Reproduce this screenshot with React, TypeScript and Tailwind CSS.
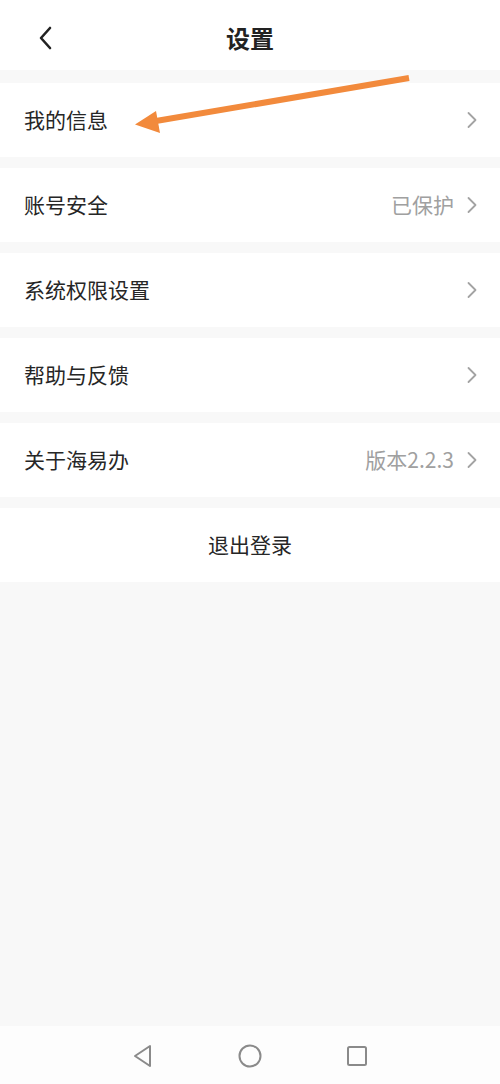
import React from 'react'

const font = { fontFamily: '"Noto Sans CJK SC", "Noto Sans", sans-serif' }

type Row = { label: string; value?: string }

const rows: Row[] = [
  { label: '我的信息' },
  { label: '账号安全', value: '已保护' },
  { label: '系统权限设置' },
  { label: '帮助与反馈' },
  { label: '关于海易办', value: '版本2.2.3' },
]

function Chevron() {
  return (
    <svg width="12" height="18" viewBox="0 0 12 18" fill="none">
      <path d="M2.5 2 L9.5 9 L2.5 16" stroke="#a3a3a3" strokeWidth="1.8" strokeLinecap="round" strokeLinejoin="round" />
    </svg>
  )
}

function SettingRow({ label, value }: Row) {
  return (
    <div className="h-[74px] bg-white flex items-center justify-between pl-6 pr-[22px]">
      <span className="text-[21px] text-[#262626]">{label}</span>
      <div className="flex items-center gap-3">
        {value && <span className="text-[21px] text-[#a0a0a0]">{value}</span>}
        <Chevron />
      </div>
    </div>
  )
}

export default function App() {
  return (
    <div className="relative w-[500px] h-[1084px] bg-[#f8f8f8] flex flex-col overflow-hidden" style={font}>
      {/* 顶部导航 */}
      <div className="h-[70px] bg-white flex items-center relative shrink-0">
        <button className="pl-[36px] pt-[6px]">
          <svg width="20" height="26" viewBox="0 0 20 26" fill="none">
            <path d="M14 3 L5 13 L14 23" stroke="#222" strokeWidth="2.6" strokeLinecap="round" strokeLinejoin="round" />
          </svg>
        </button>
        <h1 className="absolute left-0 right-0 text-center text-[24px] font-bold text-[#222] pt-[6px] pointer-events-none">设置</h1>
      </div>

      {/* 列表 */}
      <div className="flex flex-col gap-[11px] pt-[13px]">
        {rows.map((r) => (
          <SettingRow key={r.label} {...r} />
        ))}
        <div className="h-[74px] bg-white flex items-center justify-center">
          <span className="text-[21px] text-[#262626]">退出登录</span>
        </div>
      </div>

      <div className="flex-1" />

      {/* 底部系统导航 */}
      <div className="h-[58px] bg-[#fdfdfd] flex items-center justify-center gap-[82px] pt-[2px] shrink-0">
        <svg width="24" height="26" viewBox="0 0 24 26" fill="none">
          <path d="M19 3 L19 23 L4 13 Z" stroke="#8a8a8a" strokeWidth="2" strokeLinejoin="round" />
        </svg>
        <svg width="26" height="26" viewBox="0 0 26 26" fill="none">
          <circle cx="13" cy="13" r="10.5" stroke="#8a8a8a" strokeWidth="2" />
        </svg>
        <svg width="24" height="24" viewBox="0 0 24 24" fill="none">
          <rect x="3" y="3" width="18" height="18" rx="1.5" stroke="#8a8a8a" strokeWidth="2" />
        </svg>
      </div>

      {/* 标注箭头 */}
      <svg className="absolute left-0 top-0 pointer-events-none" width="500" height="200" viewBox="0 0 500 200">
        <path d="M409 78 L150 122" stroke="#f28a3c" strokeWidth="6" strokeLinecap="butt" />
        <path d="M135 124.5 L156 111 L160 133 Z" fill="#f28a3c" />
      </svg>
    </div>
  )
}
